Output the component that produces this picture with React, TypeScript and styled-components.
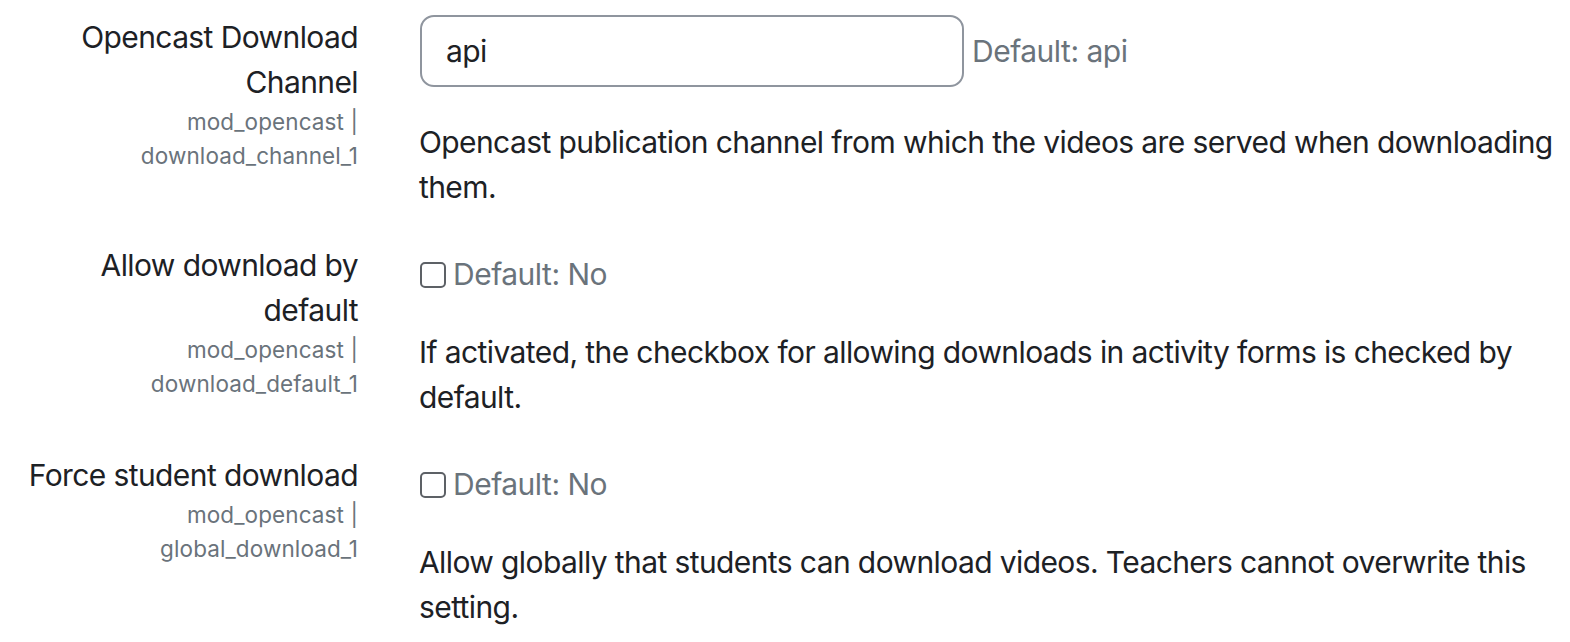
import React from "react";
import styled, { createGlobalStyle } from "styled-components";

const Global = createGlobalStyle`
  html, body { margin: 0; padding: 0; background: #fff; }
  body {
    font-family: Inter, "Noto Sans", "Liberation Sans", sans-serif;
    color: #1d2125;
    font-size: 30px;
    line-height: 45px;
  }
`;

const Page = styled.div`
  padding: 15px 0 0 0;
  width: 1570px;
`;

const Setting = styled.div`
  display: grid;
  grid-template-columns: 358px 1140px;
  column-gap: 61px;
  margin-bottom: 33px;
`;

const LabelCol = styled.div`
  text-align: right;
`;

const Title = styled.div`
  font-size: 30px;
  line-height: 45px;
  letter-spacing: -0.6px;
  color: #1d2125;
`;

const ShortName = styled.div`
  font-size: 22.5px;
  line-height: 34px;
  letter-spacing: 0.1px;
  color: #6a737b;
`;

const ContentCol = styled.div<{ $offset: number }>`
  padding-top: ${(p) => p.$offset}px;
`;

const ControlRow = styled.div`
  display: flex;
  align-items: center;
`;

const TextInput = styled.div`
  box-sizing: border-box;
  width: 544px;
  height: 72px;
  margin-left: 1px;
  border: 2px solid #8f959e;
  border-radius: 14px;
  padding: 0 24px;
  display: flex;
  align-items: center;
  font-size: 30px;
  letter-spacing: -0.6px;
  color: #1d2125;
  margin-right: 8px;
`;

const Checkbox = styled.span`
  box-sizing: border-box;
  width: 26px;
  height: 26px;
  margin-left: 1px;
  border: 2px solid #5d6166;
  border-radius: 5px;
  margin-right: 7px;
  flex: none;
`;

const DefaultInfo = styled.span`
  font-size: 30px;
  line-height: 45px;
  letter-spacing: -0.5px;
  color: #6a737b;
`;

const Description = styled.div`
  margin-top: 33px;
  font-size: 30px;
  line-height: 45px;
  letter-spacing: -0.6px;
  color: #1d2125;
`;

type Item = {
  title: string[];
  short: string[];
  kind: "text" | "check";
  value?: string;
  def: string;
  desc: string;
};

const items: Item[] = [
  {
    title: ["Opencast Download", "Channel"],
    short: ["mod_opencast |", "download_channel_1"],
    kind: "text",
    value: "api",
    def: "Default: api",
    desc: "Opencast publication channel from which the videos are served when downloading them.",
  },
  {
    title: ["Allow download by", "default"],
    short: ["mod_opencast |", "download_default_1"],
    kind: "check",
    def: "Default: No",
    desc: "If activated, the checkbox for allowing downloads in activity forms is checked by default.",
  },
  {
    title: ["Force student download"],
    short: ["mod_opencast |", "global_download_1"],
    kind: "check",
    def: "Default: No",
    desc: "Allow globally that students can download videos. Teachers cannot overwrite this setting.",
  },
];

export default function App() {
  return (
    <>
      <Global />
      <Page>
        {items.map((it, i) => (
          <Setting key={i}>
            <LabelCol>
              {it.title.map((t, j) => (
                <Title key={j}>{t}</Title>
              ))}
              {it.short.map((s, j) => (
                <ShortName key={j}>{s}</ShortName>
              ))}
            </LabelCol>
            <ContentCol $offset={it.kind === "check" ? 9 : 0}>
              <ControlRow>
                {it.kind === "text" ? (
                  <TextInput>{it.value}</TextInput>
                ) : (
                  <Checkbox />
                )}
                <DefaultInfo>{it.def}</DefaultInfo>
              </ControlRow>
              <Description>{it.desc}</Description>
            </ContentCol>
          </Setting>
        ))}
      </Page>
    </>
  );
}
